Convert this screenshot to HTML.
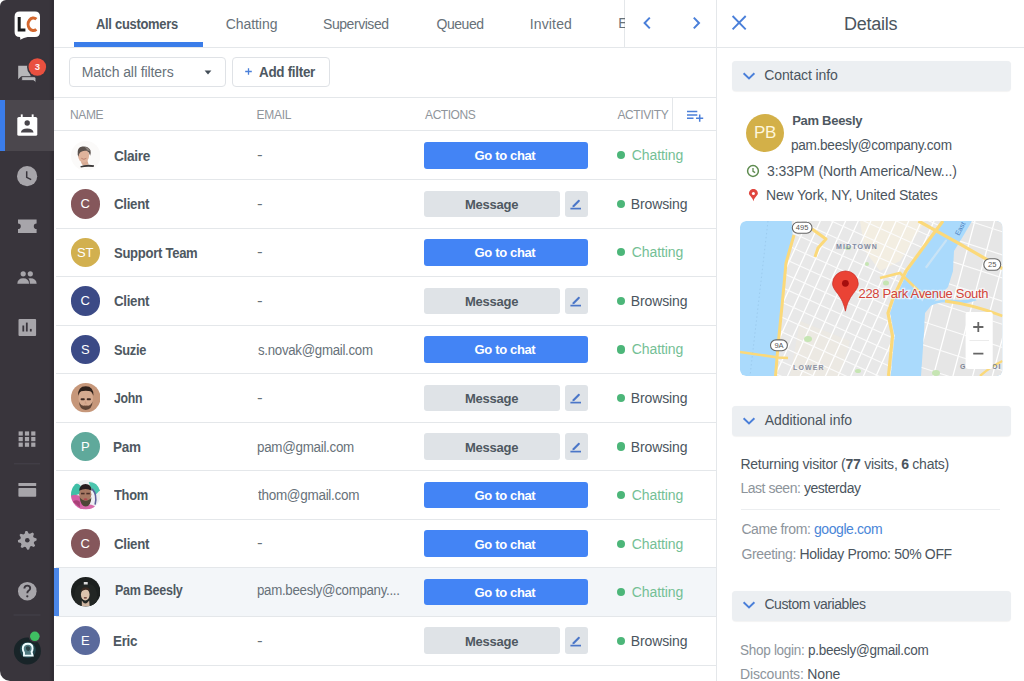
<!DOCTYPE html><html><head><meta charset="utf-8"><style>
*{margin:0;padding:0;box-sizing:border-box}
html,body{width:1024px;height:681px;overflow:hidden;background:#fff;font-family:"Liberation Sans",sans-serif}
.t{position:absolute;white-space:nowrap}
.abs{position:absolute}
.hline{position:absolute;height:1px;background:#e4e7ea}
.vline{position:absolute;width:1px;background:#e4e7ea}
.sb{position:absolute;left:0;top:0;width:54px;height:681px;background:linear-gradient(90deg,#39353c 0,#39353c 49px,#2f2b32 53px,#36323a 54px);border-top-left-radius:6px;border-bottom-left-radius:10px}
.av{position:absolute;width:29.5px;height:29.5px;border-radius:50%;color:#fff;font-size:13px;text-align:center;line-height:29.5px;overflow:hidden}
.av span{display:block}
.btn{position:absolute;height:26.6px;border-radius:3px}
.btn.blue{left:423.7px;width:164.2px;background:#4384f5}
.btn.gray{left:423.7px;width:136.7px;background:#dfe3e7}
.btn.edit{left:565px;width:22.9px;background:#dfe3e7;display:flex;align-items:center;justify-content:center}
.dot{position:absolute;left:616.6px;width:8.2px;height:8.2px;border-radius:50%;background:#4cb679}
.rowsel{position:absolute;left:54px;width:662px;background:#f3f6f9}
.bar{position:absolute;left:731.6px;width:279px;height:30px;background:#eceff2;border-radius:4px;box-shadow:0 0.5px 1px rgba(0,0,0,0.05)}
</style></head><body><div class="sb"></div><div class="abs" style="left:0;top:100px;width:54px;height:50.7px;background:#4b474d"></div><div class="abs" style="left:0;top:100px;width:5px;height:50.7px;background:#3b7de9"></div><svg class="abs" style="left:0;top:0" width="54" height="681" viewBox="0 0 54 681"><path d="M19.6 11.6 H35 Q40 11.6 40 16.6 V31.9 Q40 36.9 35 36.9 H27.6 Q24 37.2 20.2 39.8 Q20.6 37.6 19.8 36.9 Q14.6 36.9 14.6 31.9 V16.6 Q14.6 11.6 19.6 11.6 Z" fill="#ffffff"/><path d="M19.2 16.9 V30.1 H25.4" stroke="#18191b" stroke-width="3" fill="none"/><path d="M36.4 19.2 A5.2 6.3 0 1 0 36.4 29.4" stroke="#d4672e" stroke-width="3" fill="none"/><path d="M18.2 65.8 H30.5 V76.5 H21 L18.2 79.2 Z" fill="#b7b7ba"/><path d="M21.7 76.7 H34.2 Q35.9 76.7 35.9 78.4 V82.6 L33.4 80.6 H21.7 Z" fill="#b7b7ba" stroke="#39353c" stroke-width="0.8"/><circle cx="37.3" cy="67" r="10.3" fill="#39353c"/><circle cx="37.3" cy="67" r="8.8" fill="#e9503f"/><text x="37.4" y="70.4" font-family="Liberation Sans" font-size="9.5" font-weight="700" fill="#fdeeee" text-anchor="middle">3</text><rect x="17.3" y="117" width="20" height="18.8" rx="1.6" fill="#ffffff"/><rect x="20.8" y="114.4" width="1.9" height="3.5" fill="#ffffff"/><rect x="31.7" y="114.4" width="1.9" height="3.5" fill="#ffffff"/><circle cx="27.2" cy="123" r="2.7" fill="#48454b"/><path d="M20.8 132.4 Q21.5 128.6 27.2 128.6 Q32.9 128.6 33.6 132.4 Z" fill="#48454b"/><circle cx="27.1" cy="176.2" r="10.1" fill="#a7a5aa"/><path d="M26.7 171.2 V177.4 L31.2 179.6" stroke="#39353c" stroke-width="1.5" fill="none"/><path d="M18 219.4 H36.6 V223.4 A2.8 2.8 0 0 0 36.6 229 V232.9 H18 V229 A2.8 2.8 0 0 0 18 223.4 Z" fill="#a7a5aa"/><circle cx="23.2" cy="273.8" r="2.6" fill="#a7a5aa"/><circle cx="30.3" cy="273.8" r="2.6" fill="#a7a5aa"/><path d="M17.3 283.8 Q17.6 278.3 23.2 278.3 Q28.8 278.3 29.1 283.8 Z" fill="#a7a5aa"/><path d="M29.8 283.8 Q30 279.8 28.2 278.6 Q29.2 278.3 30.3 278.3 Q36.3 278.3 36.7 283.8 Z" fill="#a7a5aa"/><rect x="18.5" y="319" width="17.6" height="17.1" rx="1" fill="#a7a5aa"/><rect x="22.4" y="325.5" width="1.8" height="6" fill="#39353c"/><rect x="25.9" y="322.6" width="1.8" height="8.9" fill="#39353c"/><rect x="29.9" y="328.9" width="1.8" height="2.6" fill="#39353c"/><rect x="18.6" y="431.4" width="4.2" height="4.2" fill="#a7a5aa"/><rect x="24.9" y="431.4" width="4.2" height="4.2" fill="#a7a5aa"/><rect x="31.2" y="431.4" width="4.2" height="4.2" fill="#a7a5aa"/><rect x="18.6" y="437.0" width="4.2" height="4.2" fill="#a7a5aa"/><rect x="24.9" y="437.0" width="4.2" height="4.2" fill="#a7a5aa"/><rect x="31.2" y="437.0" width="4.2" height="4.2" fill="#a7a5aa"/><rect x="18.6" y="442.6" width="4.2" height="4.2" fill="#a7a5aa"/><rect x="24.9" y="442.6" width="4.2" height="4.2" fill="#a7a5aa"/><rect x="31.2" y="442.6" width="4.2" height="4.2" fill="#a7a5aa"/><rect x="14" y="463.3" width="26" height="1" fill="#45424a"/><rect x="18.4" y="483" width="17.8" height="3" rx="0.6" fill="#a7a5aa"/><rect x="18.4" y="488" width="17.8" height="8.7" rx="0.8" fill="#a7a5aa"/><polygon points="36.52,538.47 36.70,540.30 34.17,541.67 33.77,542.98 35.12,545.52 33.95,546.95 31.19,546.12 29.98,546.77 29.13,549.52 27.30,549.70 25.93,547.17 24.62,546.77 22.08,548.12 20.65,546.95 21.48,544.19 20.83,542.98 18.08,542.13 17.90,540.30 20.43,538.93 20.83,537.62 19.48,535.08 20.65,533.65 23.41,534.48 24.62,533.83 25.47,531.08 27.30,530.90 28.67,533.43 29.98,533.83 32.52,532.48 33.95,533.65 33.12,536.41 33.77,537.62" fill="#a7a5aa"/><circle cx="27.3" cy="540.3" r="2.3" fill="#39353c"/><circle cx="27.3" cy="591.2" r="9.3" fill="#a7a5aa"/><path d="M24.4 588.6 Q24.4 585.6 27.3 585.6 Q30.2 585.6 30.2 588.3 Q30.2 590 28.4 590.9 Q27.3 591.5 27.3 593.2" stroke="#39353c" stroke-width="1.9" fill="none"/><circle cx="27.3" cy="596.3" r="1.15" fill="#39353c"/><rect x="13.5" y="614.5" width="27" height="1" fill="#45424a"/><circle cx="27.4" cy="651" r="13.5" fill="#182428"/><circle cx="27.8" cy="650" r="8" fill="#2c6f78" opacity="0.45"/><path d="M24 655.5 V652.5 Q22.8 651 22.8 648.6 Q22.8 643.8 28 643.8 Q32.6 643.8 32.6 648.4 Q32.6 650.6 31.5 651.8 L32.6 655.6 Z" fill="#a9dde3" fill-opacity="0.35" stroke="#effdff" stroke-width="1.9"/><path d="M26 647 Q28 645.5 30 647.5 Q30.5 650 28.5 651 Q26.5 651 26 649 Z" fill="#1a2a2e" opacity="0.7"/><circle cx="34.8" cy="636.3" r="6.2" fill="#39353c"/><circle cx="34.8" cy="636.3" r="4.8" fill="#3fbf62"/></svg><div class="abs" style="left:73.5px;top:42px;width:129.5px;height:4.5px;background:#3b7de9"></div><div class="hline" style="left:54px;width:970px;top:46.5px"></div><div class="vline" style="left:624px;top:0;height:47px"></div><div class="vline" style="left:716px;top:0;height:681px"></div><div class="abs" style="left:69px;top:57px;width:157px;height:30px;border:1px solid #dfe2e6;border-radius:4px"></div><div class="abs" style="left:231.5px;top:57px;width:98.7px;height:30px;border:1px solid #dfe2e6;border-radius:4px"></div><div class="hline" style="left:54px;width:662px;top:96.5px"></div><div class="hline" style="left:54px;width:662px;top:130px"></div><div class="vline" style="left:672px;top:97px;height:33px"></div><div class="hline" style="left:56px;width:660px;top:179.05px"></div><svg class="abs" style="left:70.50px;top:140.52px" width="29.5" height="29.5" viewBox="0 0 30 30"><defs><clipPath id="cpphoto1"><circle cx="15" cy="15" r="15"/></clipPath></defs><g clip-path="url(#cpphoto1)"><rect width="30" height="30" fill="#fbfaf9"/><path d="M10 20 Q10.5 24 13 25 L18 24 Q17 21 16.5 19 Z" fill="#d7ab94"/><ellipse cx="12.8" cy="14.8" rx="5.6" ry="7.2" fill="#dfb39c"/><path d="M6.8 14 Q5.8 6.5 11.5 5.6 Q17.5 4.8 19.8 9.5 Q20.5 12 19.5 15 Q18.5 11 16 10 Q12 9.2 9.5 11.5 Q8 13 7.5 16 Z" fill="#5b514d"/><path d="M14 6 Q18 6 19.5 10 L17 10 Z" fill="#8a817c"/><path d="M10.5 17.6 Q13 19.6 15.6 17.6" stroke="#b77b6a" stroke-width="0.9" fill="none"/><path d="M9.5 25.8 Q14 23.5 23.5 24.6 L23 26.4 Q15 25.6 10 27 Z" fill="#3b3838"/></g></svg><div class="btn blue" style="top:141.97px"></div><div class="dot" style="top:151.17px"></div><div class="hline" style="left:56px;width:660px;top:227.59px"></div><div class="av" style="left:70.5px;top:189.07px;background:#85575b"><span>C</span></div><div class="btn gray" style="top:190.52px"></div><div class="btn edit" style="top:190.52px"><svg width="14" height="14" viewBox="0 0 14 14"><path d="M3.7 8.4 L9.4 2.7 L10.6 3.1 L10.9 4.2 L5.2 9.9 L3.4 10.3 Z" fill="#4b76c8"/><path d="M1.4 11.6 H12 " stroke="#4b76c8" stroke-width="1.7"/></svg></div><div class="dot" style="top:199.72px"></div><div class="hline" style="left:56px;width:660px;top:276.13px"></div><div class="av" style="left:70.5px;top:237.61px;background:#d2b04f"><span>ST</span></div><div class="btn blue" style="top:239.06px"></div><div class="dot" style="top:248.26px"></div><div class="hline" style="left:56px;width:660px;top:324.68px"></div><div class="av" style="left:70.5px;top:286.16px;background:#3b4a86"><span>C</span></div><div class="btn gray" style="top:287.61px"></div><div class="btn edit" style="top:287.61px"><svg width="14" height="14" viewBox="0 0 14 14"><path d="M3.7 8.4 L9.4 2.7 L10.6 3.1 L10.9 4.2 L5.2 9.9 L3.4 10.3 Z" fill="#4b76c8"/><path d="M1.4 11.6 H12 " stroke="#4b76c8" stroke-width="1.7"/></svg></div><div class="dot" style="top:296.81px"></div><div class="hline" style="left:56px;width:660px;top:373.23px"></div><div class="av" style="left:70.5px;top:334.70px;background:#3b4a86"><span>S</span></div><div class="btn blue" style="top:336.15px"></div><div class="dot" style="top:345.35px"></div><div class="hline" style="left:56px;width:660px;top:421.77px"></div><svg class="abs" style="left:70.50px;top:383.25px" width="29.5" height="29.5" viewBox="0 0 30 30"><defs><clipPath id="cpphoto2"><circle cx="15" cy="15" r="15"/></clipPath></defs><g clip-path="url(#cpphoto2)"><rect width="30" height="30" fill="#c6977a"/><ellipse cx="15" cy="16" rx="7.4" ry="10" fill="#d6ab90"/><path d="M7.2 13 Q6.8 3.2 15 3.2 Q23.2 3.2 22.8 13 L21.6 10.5 Q21 8 15 8 Q9 8 8.4 10.5 Z" fill="#2e211b"/><rect x="9.8" y="15.6" width="4.2" height="2" rx="0.8" fill="#3f2a22"/><rect x="16" y="15.6" width="4.2" height="2" rx="0.8" fill="#3f2a22"/><path d="M14.3 17.5 L13.8 21 L16.2 21 Z" fill="#c99a80"/><path d="M8 18.5 Q8.5 27 15 27.5 Q21.5 27 22 18.5 Q20.5 23.5 15 23.5 Q9.5 23.5 8 18.5 Z" fill="#4a3428" opacity="0.85"/><rect x="13" y="23" width="4" height="1.2" fill="#6a4a3a"/></g></svg><div class="btn gray" style="top:384.70px"></div><div class="btn edit" style="top:384.70px"><svg width="14" height="14" viewBox="0 0 14 14"><path d="M3.7 8.4 L9.4 2.7 L10.6 3.1 L10.9 4.2 L5.2 9.9 L3.4 10.3 Z" fill="#4b76c8"/><path d="M1.4 11.6 H12 " stroke="#4b76c8" stroke-width="1.7"/></svg></div><div class="dot" style="top:393.90px"></div><div class="hline" style="left:56px;width:660px;top:470.31px"></div><div class="av" style="left:70.5px;top:431.79px;background:#5fa99b"><span>P</span></div><div class="btn gray" style="top:433.24px"></div><div class="btn edit" style="top:433.24px"><svg width="14" height="14" viewBox="0 0 14 14"><path d="M3.7 8.4 L9.4 2.7 L10.6 3.1 L10.9 4.2 L5.2 9.9 L3.4 10.3 Z" fill="#4b76c8"/><path d="M1.4 11.6 H12 " stroke="#4b76c8" stroke-width="1.7"/></svg></div><div class="dot" style="top:442.44px"></div><div class="hline" style="left:56px;width:660px;top:518.86px"></div><svg class="abs" style="left:70.50px;top:480.34px" width="29.5" height="29.5" viewBox="0 0 30 30"><defs><clipPath id="cpphoto3"><circle cx="15" cy="15" r="15"/></clipPath></defs><g clip-path="url(#cpphoto3)"><rect width="30" height="30" fill="#eef0f3"/><path d="M0 6 Q5 1 10 6 L9 14 L0 17 Z" fill="#3fbfa6"/><path d="M18 2 Q27 2 30 10 L25 15 L20 8 Z" fill="#4cc5ae"/><path d="M21.5 9 Q27 15 24.5 25" stroke="#5d5f9a" stroke-width="1.6" fill="none"/><path d="M0 16 Q6 13 11 18 L13 30 H0 Z" fill="#d45ea4"/><path d="M8 30 Q12 24 18 25 Q24 25 27 30 Z" fill="#d86aa9"/><path d="M2 22 Q5 19 9 22 L9 28 Z" fill="#8c2f5a" opacity="0.6"/><ellipse cx="14.5" cy="14.5" rx="6.2" ry="8" fill="#a77964"/><path d="M8.3 11 Q8.8 4 14.8 4 Q20.8 4 21 11 Q15 7.5 8.3 11 Z" fill="#261c1f"/><path d="M8.8 17.5 Q9.8 27 15 27 Q20.2 27 20.8 17.5 Q18.5 21 15 21 Q11.5 21 8.8 17.5 Z" fill="#4f4636"/><rect x="10.2" y="13" width="3.6" height="1.6" fill="#4a2e28"/><rect x="15.6" y="13" width="3.6" height="1.6" fill="#4a2e28"/><ellipse cx="14.8" cy="19.6" rx="2" ry="1" fill="#b0484f"/></g></svg><div class="btn blue" style="top:481.79px"></div><div class="dot" style="top:490.99px"></div><div class="hline" style="left:56px;width:660px;top:567.40px"></div><div class="av" style="left:70.5px;top:528.88px;background:#85575b"><span>C</span></div><div class="btn blue" style="top:530.33px"></div><div class="dot" style="top:539.53px"></div><div class="rowsel" style="top:567.90px;height:48.55px"></div><div class="abs" style="left:54px;top:567.90px;width:4.6px;height:48.55px;background:#4a86e8"></div><div class="hline" style="left:56px;width:660px;top:615.95px"></div><svg class="abs" style="left:70.50px;top:577.43px" width="29.5" height="29.5" viewBox="0 0 30 30"><defs><clipPath id="cpphoto4"><circle cx="15" cy="15" r="15"/></clipPath></defs><g clip-path="url(#cpphoto4)"><rect width="30" height="30" fill="#1c201f"/><path d="M4 26 Q2 14 7 9 Q15 4 23 9 Q28 15 26 26 Q22 30 15 30 Q8 30 4 26 Z" fill="#222624"/><path d="M13 5 H17 V7.5 H13 Z" fill="#dcdcdc"/><ellipse cx="14.5" cy="18" rx="4.4" ry="6" fill="#dcc3ad"/><path d="M10 15 Q10.5 10.5 15 10.5 Q19 10.5 19.5 15 Q17 12.5 14.5 13 Q12 13.5 10 15 Z" fill="#3a2a22"/><rect x="13" y="20.6" width="3.2" height="1.2" rx="0.6" fill="#5c2d26"/><path d="M11 24 Q14.5 30 18.5 24 L19 30 H11 Z" fill="#cdb4a0"/></g></svg><div class="btn blue" style="top:578.88px"></div><div class="dot" style="top:588.08px"></div><div class="hline" style="left:56px;width:660px;top:664.50px"></div><div class="av" style="left:70.5px;top:625.97px;background:#5a6a9c"><span>E</span></div><div class="btn gray" style="top:627.42px"></div><div class="btn edit" style="top:627.42px"><svg width="14" height="14" viewBox="0 0 14 14"><path d="M3.7 8.4 L9.4 2.7 L10.6 3.1 L10.9 4.2 L5.2 9.9 L3.4 10.3 Z" fill="#4b76c8"/><path d="M1.4 11.6 H12 " stroke="#4b76c8" stroke-width="1.7"/></svg></div><div class="dot" style="top:636.62px"></div><div class="bar" style="top:61px"></div><div class="bar" style="top:406px"></div><div class="bar" style="top:590.5px"></div><div class="abs" style="left:741px;width:259px;top:508.5px;height:1px;background:#eceef0"></div><div class="abs" style="left:610px;top:0;width:14.5px;height:46px;overflow:hidden"><div class="t" style="left:8.3px;top:16.4px;font-size:14px;line-height:14px;color:#677179">E</div></div><svg class="abs" style="left:640px;top:15px" width="64" height="16" viewBox="0 0 64 16"><path d="M9.8 2.6 L4.6 8 L9.8 13.4" stroke="#4a7fd9" stroke-width="2" fill="none"/><path d="M53.8 2.6 L59 8 L53.8 13.4" stroke="#4a7fd9" stroke-width="2" fill="none"/></svg><svg class="abs" style="left:203px;top:69px" width="10" height="8" viewBox="0 0 10 8"><path d="M1.6 1.6 H8.4 L5 5.6 Z" fill="#424d57"/></svg><svg class="abs" style="left:244px;top:67px" width="9" height="9" viewBox="0 0 9 9"><path d="M1.2 4.5 H7.8 M4.5 1.2 V7.8" stroke="#4a7fd9" stroke-width="1.3"/></svg><svg class="abs" style="left:684px;top:108px" width="22" height="16" viewBox="0 0 22 16"><path d="M3 3.4 H13.3 M3 7 H13.3 M3 10.2 H9.5 M12 10.2 H19.2 M15.7 6.5 V13.7" stroke="#4a7fd9" stroke-width="1.5" fill="none"/></svg><svg class="abs" style="left:730px;top:14px" width="18" height="18" viewBox="0 0 18 18"><path d="M2.6 2 L15.7 15.3 M15.7 2 L2.6 15.3" stroke="#4a7fd9" stroke-width="1.9" fill="none"/></svg><svg class="abs" style="left:741px;top:70.7px" width="16" height="10" viewBox="0 0 16 10"><path d="M2.6 2.2 L8 7.4 L13.4 2.2" stroke="#4a7fd9" stroke-width="1.9" fill="none"/></svg><svg class="abs" style="left:741px;top:415.5px" width="16" height="10" viewBox="0 0 16 10"><path d="M2.6 2.2 L8 7.4 L13.4 2.2" stroke="#4a7fd9" stroke-width="1.9" fill="none"/></svg><svg class="abs" style="left:741px;top:600.2px" width="16" height="10" viewBox="0 0 16 10"><path d="M2.6 2.2 L8 7.4 L13.4 2.2" stroke="#4a7fd9" stroke-width="1.9" fill="none"/></svg><div class="abs" style="left:746.1px;top:114.1px;width:38px;height:38px;border-radius:50%;background:#d3b048;color:#fdf6dc;font-size:17px;line-height:38px;text-align:center;letter-spacing:-0.3px">PB</div><svg class="abs" style="left:746px;top:163.6px" width="14" height="14" viewBox="0 0 14 14"><circle cx="7" cy="7" r="5.4" stroke="#5e8b4f" stroke-width="1.5" fill="none"/><path d="M7 4 V7.3 L9.2 8.6" stroke="#5e8b4f" stroke-width="1.3" fill="none"/></svg><svg class="abs" style="left:748px;top:189px" width="11" height="13" viewBox="0 0 11 13"><path d="M5.4 12.2 Q4.8 9.6 2.6 7.2 Q0.9 5.6 0.9 4.4 A4.5 4.5 0 1 1 9.9 4.4 Q9.9 5.6 8.2 7.2 Q6 9.6 5.4 12.2 Z" fill="#e0463e"/><circle cx="5.4" cy="4.5" r="1.5" fill="#fff"/></svg><svg class="abs" style="left:740px;top:221px;border-radius:6px" width="262.5" height="155" viewBox="0 0 262.5 155"><defs><clipPath id="mclip"><path d="M51.6 0 L53 16.6 L45 42.8 L42.5 81 L37 127 L34.6 155 L150.6 155 L154.6 115 L150 92 L155 77 L168 50 L190 17 L202 0 Z"/></clipPath><clipPath id="rclip"><path d="M232 0 L222 17 L214 30 L213 50 L208 66 L194 81 L185 92 L183.8 115 L181 155 L262.5 155 L262.5 0 Z"/></clipPath><clipPath id="mapr"><rect width="262.5" height="155" rx="6"/></clipPath></defs><g clip-path="url(#mapr)"><rect width="262.5" height="155" fill="#aadafc"/><path d="M51.6 0 L53 16.6 L45 42.8 L42.5 81 L37 127 L34.6 155 L150.6 155 L154.6 115 L150 92 L155 77 L168 50 L190 17 L202 0 Z" fill="#e8e8e8"/><path d="M232 0 L222 17 L214 30 L213 50 L208 66 L194 81 L185 92 L183.8 115 L181 155 L262.5 155 L262.5 0 Z" fill="#e6e6e6"/><path d="M120 0 L185 0 L160 40 L140 50 L125 30 Z" fill="#f3eee2" clip-path="url(#mclip)"/><path d="M60 100 L110 120 L100 155 L50 155 Z" fill="#efeadf" clip-path="url(#mclip)" opacity="0.6"/><path d="M-346.7 299.2L-15.0 -428.7M-336.3 304.0L-4.5 -424.0M-325.8 308.8L5.9 -419.2M-315.4 313.6L16.4 -414.4M-304.9 318.3L26.9 -409.6M-294.4 323.1L37.3 -404.9M-284.0 327.9L47.8 -400.1M-273.5 332.6L58.3 -395.3M-263.0 337.4L68.7 -390.6M-252.6 342.2L79.2 -385.8M-242.1 346.9L89.7 -381.0M-231.6 351.7L100.1 -376.3M-221.2 356.5L110.6 -371.5M-210.7 361.2L121.0 -366.7M-200.2 366.0L131.5 -362.0M-189.8 370.8L142.0 -357.2M-179.3 375.5L152.4 -352.4M-168.8 380.3L162.9 -347.7M-158.4 385.1L173.4 -342.9M-147.9 389.9L183.8 -338.1M-137.5 394.6L194.3 -333.3M-127.0 399.4L204.8 -328.6M-116.5 404.2L215.2 -323.8M-106.1 408.9L225.7 -319.0M-95.6 413.7L236.2 -314.3M-85.1 418.5L246.6 -309.5M-74.7 423.2L257.1 -304.7M-64.2 428.0L267.6 -300.0M-53.7 432.8L278.0 -295.2M-43.3 437.5L288.5 -290.4M-32.8 442.3L298.9 -285.7M-22.3 447.1L309.4 -280.9M-11.9 451.9L319.9 -276.1M-1.4 456.6L330.3 -271.3M9.1 461.4L340.8 -266.6M19.5 466.2L351.3 -261.8M30.0 470.9L361.7 -257.0M40.4 475.7L372.2 -252.3M50.9 480.5L382.7 -247.5M61.4 485.2L393.1 -242.7M71.8 490.0L403.6 -238.0M82.3 494.8L414.1 -233.2M92.8 499.5L424.5 -228.4M103.2 504.3L435.0 -223.7M113.7 509.1L445.5 -218.9M124.2 513.8L455.9 -214.1M134.6 518.6L466.4 -209.4M145.1 523.4L476.8 -204.6M155.6 528.2L487.3 -199.8M166.0 532.9L497.8 -195.0M176.5 537.7L508.2 -190.3M186.9 542.5L518.7 -185.5M197.4 547.2L529.2 -180.7M207.9 552.0L539.6 -176.0M218.3 556.8L550.1 -171.2M228.8 561.5L560.6 -166.4M239.3 566.3L571.0 -161.7M249.7 571.1L581.5 -156.9M260.2 575.8L592.0 -152.1M270.7 580.6L602.4 -147.4M281.1 585.4L612.9 -142.6" stroke="#ffffff" stroke-width="1.3" fill="none" clip-path="url(#mclip)"/><path d="M-64.8 -456.9L663.2 -125.2M-70.4 -444.6L657.6 -112.9M-76.0 -432.3L652.0 -100.6M-81.6 -420.1L646.4 -88.3M-87.2 -407.8L640.8 -76.0M-92.8 -395.5L635.2 -63.7M-98.4 -383.2L629.6 -51.5M-104.0 -370.9L624.0 -39.2M-109.6 -358.6L618.4 -26.9M-115.2 -346.4L612.8 -14.6M-120.8 -334.1L607.2 -2.3M-126.4 -321.8L601.6 10.0M-132.0 -309.5L596.0 22.3M-137.6 -297.2L590.4 34.5M-143.2 -284.9L584.8 46.8M-148.8 -272.6L579.2 59.1M-154.4 -260.4L573.6 71.4M-160.0 -248.1L568.0 83.7M-165.6 -235.8L562.4 96.0M-171.2 -223.5L556.8 108.2M-176.8 -211.2L551.2 120.5M-182.3 -198.9L545.6 132.8M-187.9 -186.7L540.0 145.1M-193.5 -174.4L534.4 157.4M-199.1 -162.1L528.8 169.7M-204.7 -149.8L523.2 182.0M-210.3 -137.5L517.6 194.2M-215.9 -125.2L512.0 206.5M-221.5 -112.9L506.4 218.8M-227.1 -100.7L500.8 231.1M-232.7 -88.4L495.2 243.4M-238.3 -76.1L489.6 255.7M-243.9 -63.8L484.0 267.9M-249.5 -51.5L478.4 280.2M-255.1 -39.2L472.8 292.5M-260.7 -27.0L467.2 304.8M-266.3 -14.7L461.6 317.1M-271.9 -2.4L456.0 329.4M-277.5 9.9L450.4 341.7M-283.1 22.2L444.8 353.9M-288.7 34.5L439.3 366.2M-294.3 46.8L433.7 378.5M-299.9 59.0L428.1 390.8M-305.5 71.3L422.5 403.1M-311.1 83.6L416.9 415.4M-316.7 95.9L411.3 427.6M-322.3 108.2L405.7 439.9M-327.9 120.5L400.1 452.2M-333.5 132.7L394.5 464.5M-339.1 145.0L388.9 476.8M-344.7 157.3L383.3 489.1M-350.3 169.6L377.7 501.4M-355.9 181.9L372.1 513.6M-361.5 194.2L366.5 525.9M-367.1 206.5L360.9 538.2M-372.7 218.7L355.3 550.5M-378.3 231.0L349.7 562.8M-383.9 243.3L344.1 575.1M-389.5 255.6L338.5 587.3M-395.1 267.9L332.9 599.6M-400.7 280.2L327.3 611.9" stroke="#fbfbfb" stroke-width="1.1" fill="none" clip-path="url(#mclip)"/><path d="M-519.0 317.4L-311.9 -455.4M-500.6 322.3L-293.6 -450.4M-482.3 327.2L-275.2 -445.5M-463.9 332.1L-256.9 -440.6M-445.6 337.0L-238.5 -435.7M-427.2 342.0L-220.2 -430.8M-408.9 346.9L-201.8 -425.9M-390.5 351.8L-183.5 -420.9M-372.2 356.7L-165.1 -416.0M-353.8 361.6L-146.8 -411.1M-335.5 366.6L-128.4 -406.2M-317.1 371.5L-110.1 -401.3M-298.8 376.4L-91.7 -396.4M-280.4 381.3L-73.4 -391.4M-262.1 386.2L-55.0 -386.5M-243.7 391.1L-36.6 -381.6M-225.4 396.1L-18.3 -376.7M-207.0 401.0L0.1 -371.8M-188.6 405.9L18.4 -366.8M-170.3 410.8L36.8 -361.9M-151.9 415.7L55.1 -357.0M-133.6 420.6L73.5 -352.1M-115.2 425.6L91.8 -347.2M-96.9 430.5L110.2 -342.3M-78.5 435.4L128.5 -337.3M-60.2 440.3L146.9 -332.4M-41.8 445.2L165.2 -327.5M-23.5 450.2L183.6 -322.6M-5.1 455.1L201.9 -317.7M13.2 460.0L220.3 -312.8M31.6 464.9L238.6 -307.8M49.9 469.8L257.0 -302.9M68.3 474.7L275.3 -298.0M86.6 479.7L293.7 -293.1M105.0 484.6L312.1 -288.2M123.3 489.5L330.4 -283.2M141.7 494.4L348.8 -278.3M160.1 499.3L367.1 -273.4M178.4 504.2L385.5 -268.5M196.8 509.2L403.8 -263.6M215.1 514.1L422.2 -258.7M233.5 519.0L440.5 -253.7M251.8 523.9L458.9 -248.8M270.2 528.8L477.2 -243.9M288.5 533.8L495.6 -239.0M306.9 538.7L513.9 -234.1M325.2 543.6L532.3 -229.2M343.6 548.5L550.6 -224.2M361.9 553.4L569.0 -219.3M380.3 558.3L587.3 -214.4M398.6 563.3L605.7 -209.5M417.0 568.2L624.0 -204.6M435.3 573.1L642.4 -199.6M453.7 578.0L660.8 -194.7M472.0 582.9L679.1 -189.8M490.4 587.8L697.5 -184.9M508.8 592.8L715.8 -180.0M527.1 597.7L734.2 -175.1M545.5 602.6L752.5 -170.1M563.8 607.5L770.9 -165.2M582.2 612.4L789.2 -160.3" stroke="#ffffff" stroke-width="1.3" fill="none" clip-path="url(#rclip)"/><path d="M-47.1 -668.1L713.8 -420.9M-53.9 -647.2L707.0 -400.0M-60.7 -626.3L700.2 -379.0M-67.5 -605.3L693.4 -358.1M-74.3 -584.4L686.6 -337.2M-81.1 -563.5L679.8 -316.3M-87.9 -542.6L673.0 -295.3M-94.7 -521.6L666.2 -274.4M-101.5 -500.7L659.4 -253.5M-108.3 -479.8L652.6 -232.6M-115.1 -458.9L645.8 -211.7M-121.9 -437.9L639.0 -190.7M-128.7 -417.0L632.2 -169.8M-135.5 -396.1L625.4 -148.9M-142.3 -375.2L618.6 -128.0M-149.1 -354.2L611.8 -107.0M-155.8 -333.3L605.0 -86.1M-162.6 -312.4L598.2 -65.2M-169.4 -291.5L591.4 -44.3M-176.2 -270.6L584.6 -23.3M-183.0 -249.6L577.8 -2.4M-189.8 -228.7L571.0 18.5M-196.6 -207.8L564.2 39.4M-203.4 -186.9L557.4 60.4M-210.2 -165.9L550.6 81.3M-217.0 -145.0L543.8 102.2M-223.8 -124.1L537.0 123.1M-230.6 -103.2L530.2 144.0M-237.4 -82.2L523.4 165.0M-244.2 -61.3L516.6 185.9M-251.0 -40.4L509.8 206.8M-257.8 -19.5L503.0 227.7M-264.6 1.4L496.2 248.7M-271.4 22.4L489.4 269.6M-278.2 43.3L482.6 290.5M-285.0 64.2L475.8 311.4M-291.8 85.1L469.0 332.4M-298.6 106.1L462.2 353.3M-305.4 127.0L455.4 374.2M-312.2 147.9L448.6 395.1M-319.0 168.8L441.8 416.0M-325.8 189.8L435.0 437.0M-332.6 210.7L428.2 457.9M-339.4 231.6L421.4 478.8M-346.2 252.5L414.6 499.7M-353.0 273.4L407.8 520.7M-359.8 294.4L401.0 541.6M-366.6 315.3L394.2 562.5M-373.4 336.2L387.4 583.4M-380.2 357.1L380.6 604.4M-387.0 378.1L373.9 625.3M-393.8 399.0L367.1 646.2M-400.6 419.9L360.3 667.1M-407.4 440.8L353.5 688.0M-414.2 461.8L346.7 709.0M-421.0 482.7L339.9 729.9M-427.8 503.6L333.1 750.8M-434.6 524.5L326.3 771.7M-441.4 545.5L319.5 792.7M-448.2 566.4L312.7 813.6M-455.0 587.3L305.9 834.5" stroke="#fbfbfb" stroke-width="1.1" fill="none" clip-path="url(#rclip)"/><ellipse cx="108" cy="27" rx="3" ry="2" fill="#c6e5b3"/><ellipse cx="68" cy="118" rx="4" ry="3" fill="#c6e5b3"/><ellipse cx="146" cy="62" rx="3" ry="2.5" fill="#c6e5b3"/><ellipse cx="127" cy="43" rx="2" ry="2" fill="#c6e5b3"/><ellipse cx="196" cy="152" rx="4" ry="3" fill="#c6e5b3"/><ellipse cx="118" cy="150" rx="3" ry="2" fill="#c6e5b3"/><path d="M206 19.6 L186.4 46" stroke="#c9e3f5" stroke-width="2.2" stroke-linecap="round"/><path d="M186 86 Q195 79 212 80 Q225 82 236 78" stroke="#aadafc" stroke-width="3" fill="none"/><path d="M28 0 L10 155" stroke="#9ccbee" stroke-width="1" stroke-dasharray="1.5 2.5"/><path d="M54 14 L46 42 L42.5 80 L38 125 L35.5 155" stroke="#fbd97a" stroke-width="3" fill="none"/><path d="M72 8 L86 18 L78 27 L75 36" stroke="#fbd97a" stroke-width="3" fill="none" stroke-linejoin="round"/><path d="M203 0 L191 16 L166 50 L153 77 L148 92 L152.5 115 L148.5 155" stroke="#fbd97a" stroke-width="3.2" fill="none"/><path d="M178.5 0 L221 23.6 L262.5 47.5" stroke="#fbd97a" stroke-width="3.2" fill="none"/><path d="M140 57 L160 52 L186 77" stroke="#fbd97a" stroke-width="2.6" fill="none"/><path d="M205 80 Q235 84 262.5 95" stroke="#fbd97a" stroke-width="2.8" fill="none"/><path d="M0 131 L38 136.5 L48 137" stroke="#fbd97a" stroke-width="2.6" fill="none"/><path d="M240 155 Q250 146 262.5 140" stroke="#fbd97a" stroke-width="2.4" fill="none"/><rect x="52.3" y="1.3" width="19.7" height="10.9" rx="5.4" fill="#fff" stroke="#666" stroke-width="1.1"/><text x="62.1" y="9.4" font-family="Liberation Sans" font-size="7.5" fill="#555" text-anchor="middle">495</text><rect x="243.8" y="37.7" width="16.9" height="11.5" rx="5.8" fill="#fff" stroke="#666" stroke-width="1.1"/><text x="252.2" y="46.2" font-family="Liberation Sans" font-size="7.5" fill="#555" text-anchor="middle">25</text><rect x="30.5" y="118.9" width="16.9" height="10.9" rx="5.5" fill="#fff" stroke="#666" stroke-width="1.1"/><text x="39.0" y="127.1" font-family="Liberation Sans" font-size="7.5" fill="#555" text-anchor="middle">9A</text><text x="96" y="27.5" font-family="Liberation Sans" font-size="7" font-weight="700" fill="#7f8aa3" letter-spacing="1.1">MIDTOWN</text><text x="53" y="148.8" font-family="Liberation Sans" font-size="7" font-weight="700" fill="#8a91a2" letter-spacing="1.1">LOWER</text><text x="47" y="160" font-family="Liberation Sans" font-size="7" font-weight="700" fill="#8a91a2" letter-spacing="1.1">MANHATTAN</text><text x="220" y="148" font-family="Liberation Sans" font-size="7" font-weight="700" fill="#7f8796" letter-spacing="1.1">GR</text><text x="252" y="148" font-family="Liberation Sans" font-size="7" font-weight="700" fill="#7f8796" letter-spacing="1.1">OI</text><text x="0" y="0" transform="translate(219 15) rotate(-62)" font-family="Liberation Sans" font-size="7" fill="#4a80c0">East</text><text x="118.5" y="76.5" font-family="Liberation Sans" font-size="13" fill="#d2443a" stroke="#ffffff" stroke-width="2.5" stroke-opacity="0.6" paint-order="stroke" letter-spacing="-0.32">228 Park Avenue South</text><path d="M105.4 90.2 Q103.5 80 97.5 72.5 Q92.5 66.5 92.5 62.8 A12.9 12.9 0 1 1 118.3 62.8 Q118.3 66.5 113.3 72.5 Q107.3 80 105.4 90.2 Z" fill="#ea4335" stroke="#c5221f" stroke-width="0.6"/><circle cx="105.4" cy="62.3" r="3.4" fill="#a50e0e"/><rect x="225.6" y="90.9" width="27.1" height="57" rx="2" fill="#ffffff"/><rect x="229.5" y="119.2" width="19.5" height="0.8" fill="#e6e6e6"/><path d="M233.2 106 H243.4 M238.3 100.9 V111.1" stroke="#666" stroke-width="1.8"/><path d="M233.2 132.6 H243.4" stroke="#666" stroke-width="1.8"/></g></svg><div id="tab1" class="t" style="left:95.80px;top:16.60px;font-size:14px;line-height:14px;font-weight:700;color:#4e5861;letter-spacing:-0.300px;transform:scaleX(0.9225);transform-origin:0 0;">All customers</div><div id="tab2" class="t" style="left:225.70px;top:16.90px;font-size:14px;line-height:14px;font-weight:400;color:#677179;letter-spacing:-0.058px;">Chatting</div><div id="tab3" class="t" style="left:323.00px;top:16.90px;font-size:14px;line-height:14px;font-weight:400;color:#677179;letter-spacing:-0.444px;">Supervised</div><div id="tab4" class="t" style="left:436.60px;top:16.90px;font-size:14px;line-height:14px;font-weight:400;color:#677179;letter-spacing:-0.480px;">Queued</div><div id="tab5" class="t" style="left:529.80px;top:16.90px;font-size:14px;line-height:14px;font-weight:400;color:#677179;letter-spacing:0.134px;">Invited</div><div id="flt1" class="t" style="left:81.70px;top:64.60px;font-size:14px;line-height:14px;font-weight:400;color:#677179;letter-spacing:-0.088px;">Match all filters</div><div id="flt2" class="t" style="left:259.00px;top:64.60px;font-size:14px;line-height:14px;font-weight:700;color:#4e5861;letter-spacing:-0.300px;transform:scaleX(0.9593);transform-origin:0 0;">Add filter</div><div id="h1" class="t" style="left:69.90px;top:108.60px;font-size:12px;line-height:12px;font-weight:400;color:#8f959b;letter-spacing:-0.333px;">NAME</div><div id="h2" class="t" style="left:256.50px;top:108.60px;font-size:12px;line-height:12px;font-weight:400;color:#8f959b;letter-spacing:-0.250px;">EMAIL</div><div id="h3" class="t" style="left:425.10px;top:108.60px;font-size:12px;line-height:12px;font-weight:400;color:#8f959b;letter-spacing:-0.467px;">ACTIONS</div><div id="h4" class="t" style="left:617.40px;top:108.60px;font-size:12px;line-height:12px;font-weight:400;color:#8f959b;letter-spacing:-0.371px;">ACTIVITY</div><div id="n0" class="t" style="left:114.40px;top:148.57px;font-size:14px;line-height:14px;font-weight:700;color:#4e5861;letter-spacing:-0.300px;transform:scaleX(0.9730);transform-origin:0 0;">Claire</div><div id="e0" class="t" style="left:256.90px;top:148.07px;font-size:14px;line-height:14px;font-weight:400;color:#677179;letter-spacing:0.000px;transform:scaleX(1.2);transform-origin:0 0;">-</div><div id="b0" class="t" style="left:474.60px;top:149.27px;font-size:13px;line-height:13px;font-weight:700;color:#ffffff;letter-spacing:-0.356px;">Go to chat</div><div id="a0" class="t" style="left:631.80px;top:148.27px;font-size:14px;line-height:14px;font-weight:400;color:#74c095;letter-spacing:-0.085px;">Chatting</div><div id="n1" class="t" style="left:114.40px;top:197.12px;font-size:14px;line-height:14px;font-weight:700;color:#4e5861;letter-spacing:-0.300px;transform:scaleX(0.9474);transform-origin:0 0;">Client</div><div id="e1" class="t" style="left:256.90px;top:196.62px;font-size:14px;line-height:14px;font-weight:400;color:#677179;letter-spacing:0.000px;transform:scaleX(1.2);transform-origin:0 0;">-</div><div id="b1" class="t" style="left:465.00px;top:197.82px;font-size:13px;line-height:13px;font-weight:700;color:#4e5861;letter-spacing:-0.233px;">Message</div><div id="a1" class="t" style="left:630.80px;top:196.82px;font-size:14px;line-height:14px;font-weight:400;color:#4b555e;letter-spacing:-0.115px;">Browsing</div><div id="n2" class="t" style="left:114.40px;top:245.66px;font-size:14px;line-height:14px;font-weight:700;color:#4e5861;letter-spacing:-0.300px;transform:scaleX(0.9326);transform-origin:0 0;">Support Team</div><div id="e2" class="t" style="left:256.90px;top:245.16px;font-size:14px;line-height:14px;font-weight:400;color:#677179;letter-spacing:0.000px;transform:scaleX(1.2);transform-origin:0 0;">-</div><div id="b2" class="t" style="left:474.60px;top:246.36px;font-size:13px;line-height:13px;font-weight:700;color:#ffffff;letter-spacing:-0.356px;">Go to chat</div><div id="a2" class="t" style="left:631.80px;top:245.36px;font-size:14px;line-height:14px;font-weight:400;color:#74c095;letter-spacing:-0.085px;">Chatting</div><div id="n3" class="t" style="left:114.40px;top:294.21px;font-size:14px;line-height:14px;font-weight:700;color:#4e5861;letter-spacing:-0.300px;transform:scaleX(0.9474);transform-origin:0 0;">Client</div><div id="e3" class="t" style="left:256.90px;top:293.71px;font-size:14px;line-height:14px;font-weight:400;color:#677179;letter-spacing:0.000px;transform:scaleX(1.2);transform-origin:0 0;">-</div><div id="b3" class="t" style="left:465.00px;top:294.91px;font-size:13px;line-height:13px;font-weight:700;color:#4e5861;letter-spacing:-0.233px;">Message</div><div id="a3" class="t" style="left:630.80px;top:293.91px;font-size:14px;line-height:14px;font-weight:400;color:#4b555e;letter-spacing:-0.115px;">Browsing</div><div id="n4" class="t" style="left:114.40px;top:342.75px;font-size:14px;line-height:14px;font-weight:700;color:#4e5861;letter-spacing:-0.300px;transform:scaleX(0.9143);transform-origin:0 0;">Suzie</div><div id="e4" class="t" style="left:257.60px;top:342.75px;font-size:14px;line-height:14px;font-weight:400;color:#677179;letter-spacing:-0.300px;transform:scaleX(0.9463);transform-origin:0 0;">s.novak@gmail.com</div><div id="b4" class="t" style="left:474.60px;top:343.45px;font-size:13px;line-height:13px;font-weight:700;color:#ffffff;letter-spacing:-0.356px;">Go to chat</div><div id="a4" class="t" style="left:631.80px;top:342.45px;font-size:14px;line-height:14px;font-weight:400;color:#74c095;letter-spacing:-0.085px;">Chatting</div><div id="n5" class="t" style="left:114.40px;top:391.30px;font-size:14px;line-height:14px;font-weight:700;color:#4e5861;letter-spacing:-0.300px;transform:scaleX(0.8750);transform-origin:0 0;">John</div><div id="e5" class="t" style="left:256.90px;top:390.80px;font-size:14px;line-height:14px;font-weight:400;color:#677179;letter-spacing:0.000px;transform:scaleX(1.2);transform-origin:0 0;">-</div><div id="b5" class="t" style="left:465.00px;top:392.00px;font-size:13px;line-height:13px;font-weight:700;color:#4e5861;letter-spacing:-0.233px;">Message</div><div id="a5" class="t" style="left:630.80px;top:391.00px;font-size:14px;line-height:14px;font-weight:400;color:#4b555e;letter-spacing:-0.115px;">Browsing</div><div id="n6" class="t" style="left:113.44px;top:439.84px;font-size:14px;line-height:14px;font-weight:700;color:#4e5861;letter-spacing:-0.300px;transform:scaleX(0.9630);transform-origin:0 0;">Pam</div><div id="e6" class="t" style="left:256.64px;top:439.84px;font-size:14px;line-height:14px;font-weight:400;color:#677179;letter-spacing:-0.300px;transform:scaleX(0.9570);transform-origin:0 0;">pam@gmail.com</div><div id="b6" class="t" style="left:465.00px;top:440.54px;font-size:13px;line-height:13px;font-weight:700;color:#4e5861;letter-spacing:-0.233px;">Message</div><div id="a6" class="t" style="left:630.80px;top:439.54px;font-size:14px;line-height:14px;font-weight:400;color:#4b555e;letter-spacing:-0.115px;">Browsing</div><div id="n7" class="t" style="left:114.40px;top:488.39px;font-size:14px;line-height:14px;font-weight:700;color:#4e5861;letter-spacing:-0.300px;transform:scaleX(0.9189);transform-origin:0 0;">Thom</div><div id="e7" class="t" style="left:257.60px;top:488.39px;font-size:14px;line-height:14px;font-weight:400;color:#677179;letter-spacing:-0.300px;transform:scaleX(0.9638);transform-origin:0 0;">thom@gmail.com</div><div id="b7" class="t" style="left:474.60px;top:489.09px;font-size:13px;line-height:13px;font-weight:700;color:#ffffff;letter-spacing:-0.356px;">Go to chat</div><div id="a7" class="t" style="left:631.80px;top:488.09px;font-size:14px;line-height:14px;font-weight:400;color:#74c095;letter-spacing:-0.085px;">Chatting</div><div id="n8" class="t" style="left:114.40px;top:536.93px;font-size:14px;line-height:14px;font-weight:700;color:#4e5861;letter-spacing:-0.300px;transform:scaleX(0.9474);transform-origin:0 0;">Client</div><div id="e8" class="t" style="left:256.90px;top:536.43px;font-size:14px;line-height:14px;font-weight:400;color:#677179;letter-spacing:0.000px;transform:scaleX(1.2);transform-origin:0 0;">-</div><div id="b8" class="t" style="left:474.60px;top:537.63px;font-size:13px;line-height:13px;font-weight:700;color:#ffffff;letter-spacing:-0.356px;">Go to chat</div><div id="a8" class="t" style="left:631.80px;top:536.63px;font-size:14px;line-height:14px;font-weight:400;color:#74c095;letter-spacing:-0.085px;">Chatting</div><div id="n9" class="t" style="left:114.71px;top:583.48px;font-size:14px;line-height:14px;font-weight:700;color:#4e5861;letter-spacing:-0.300px;transform:scaleX(0.8933);transform-origin:0 0;">Pam Beesly</div><div id="e9" class="t" style="left:257.35px;top:583.48px;font-size:14px;line-height:14px;font-weight:400;color:#677179;letter-spacing:-0.300px;transform:scaleX(0.9477);transform-origin:0 0;">pam.beesly@company....</div><div id="b9" class="t" style="left:474.60px;top:586.18px;font-size:13px;line-height:13px;font-weight:700;color:#ffffff;letter-spacing:-0.356px;">Go to chat</div><div id="a9" class="t" style="left:631.80px;top:585.18px;font-size:14px;line-height:14px;font-weight:400;color:#74c095;letter-spacing:-0.085px;">Chatting</div><div id="n10" class="t" style="left:113.44px;top:634.02px;font-size:14px;line-height:14px;font-weight:700;color:#4e5861;letter-spacing:-0.300px;transform:scaleX(0.9583);transform-origin:0 0;">Eric</div><div id="e10" class="t" style="left:256.90px;top:633.52px;font-size:14px;line-height:14px;font-weight:400;color:#677179;letter-spacing:0.000px;transform:scaleX(1.2);transform-origin:0 0;">-</div><div id="b10" class="t" style="left:465.00px;top:634.72px;font-size:13px;line-height:13px;font-weight:700;color:#4e5861;letter-spacing:-0.233px;">Message</div><div id="a10" class="t" style="left:630.80px;top:633.72px;font-size:14px;line-height:14px;font-weight:400;color:#4b555e;letter-spacing:-0.115px;">Browsing</div><div id="d1" class="t" style="left:843.90px;top:15.30px;font-size:18px;line-height:18px;font-weight:400;color:#4b555e;letter-spacing:-0.233px;">Details</div><div id="d2" class="t" style="left:764.20px;top:67.70px;font-size:14px;line-height:14px;font-weight:400;color:#4b555e;letter-spacing:-0.091px;">Contact info</div><div id="d3" class="t" style="left:792.20px;top:113.60px;font-size:13px;line-height:13px;font-weight:700;color:#4e5861;letter-spacing:-0.289px;">Pam Beesly</div><div id="d4" class="t" style="left:791.43px;top:137.90px;font-size:14px;line-height:14px;font-weight:400;color:#4b555e;letter-spacing:-0.300px;transform:scaleX(0.9720);transform-origin:0 0;">pam.beesly@company.com</div><div id="d5" class="t" style="left:767.10px;top:163.50px;font-size:14px;line-height:14px;font-weight:400;color:#4b555e;letter-spacing:-0.114px;">3:33PM (North America/New...)</div><div id="d6" class="t" style="left:766.10px;top:187.60px;font-size:14px;line-height:14px;font-weight:400;color:#4b555e;letter-spacing:-0.184px;">New York, NY, United States</div><div id="d7" class="t" style="left:764.70px;top:413.20px;font-size:14px;line-height:14px;font-weight:400;color:#4b555e;letter-spacing:-0.043px;">Additional info</div><div id="d8" class="t" style="left:740.40px;top:457.00px;font-size:14px;line-height:14px;font-weight:400;color:#4b555e;letter-spacing:-0.243px;">Returning visitor (<b>77</b> visits, <b>6</b> chats)</div><div id="d9" class="t" style="left:740.40px;top:481.30px;font-size:14px;line-height:14px;font-weight:400;color:#4b555e;letter-spacing:-0.453px;"><span style="color:#8d949b">Last seen:</span> yesterday</div><div id="d10" class="t" style="left:741.40px;top:522.00px;font-size:14px;line-height:14px;font-weight:400;color:#4b555e;letter-spacing:-0.410px;"><span style="color:#8d949b">Came from:</span> <span style="color:#4a86d8">google.com</span></div><div id="d11" class="t" style="left:741.40px;top:546.90px;font-size:14px;line-height:14px;font-weight:400;color:#4b555e;letter-spacing:-0.329px;"><span style="color:#8d949b">Greeting:</span> Holiday Promo: 50% OFF</div><div id="d12" class="t" style="left:764.40px;top:597.30px;font-size:14px;line-height:14px;font-weight:400;color:#4b555e;letter-spacing:-0.440px;">Custom variables</div><div id="d13" class="t" style="left:740.03px;top:642.50px;font-size:14px;line-height:14px;font-weight:400;color:#4b555e;letter-spacing:-0.300px;transform:scaleX(0.9660);transform-origin:0 0;"><span style="color:#8d949b">Shop login:</span> p.beesly@gmail.com</div><div id="d14" class="t" style="left:740.00px;top:666.90px;font-size:14px;line-height:14px;font-weight:400;color:#4b555e;letter-spacing:-0.172px;"><span style="color:#8d949b">Discounts:</span> None</div></body></html>
